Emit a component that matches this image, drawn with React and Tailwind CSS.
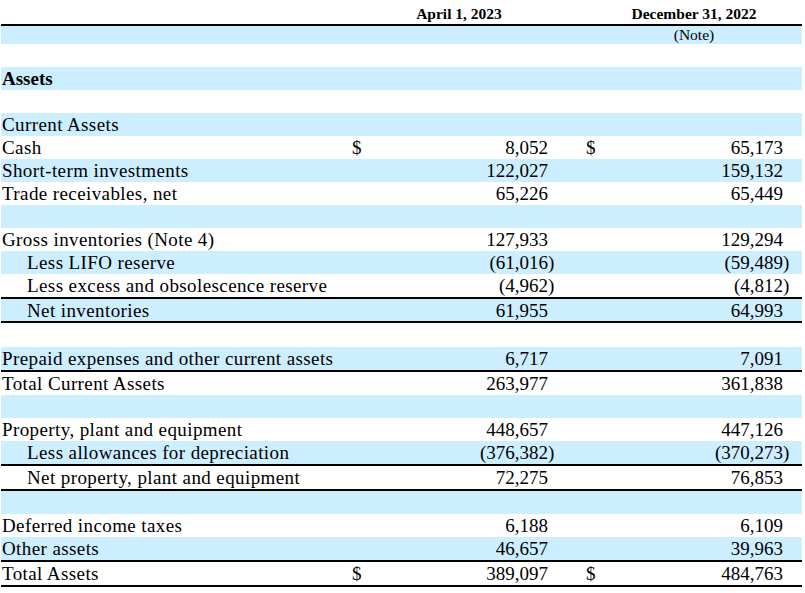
import React from "react";

const rows = [
  { h: "h-[23px]" },
  { label: "Assets", bold: true, blue: true, h: "h-[23px]" },
  { h: "h-[23px]" },
  { label: "Current Assets", blue: true, h: "h-[23px]" },
  { label: "Cash", a: "8,052", b: "65,173", dollar: true, h: "h-[23px]" },
  { label: "Short-term investments", a: "122,027", b: "159,132", blue: true, h: "h-[23px]" },
  { label: "Trade receivables, net", a: "65,226", b: "65,449", h: "h-[23px]" },
  { blue: true, h: "h-[23px]" },
  { label: "Gross inventories (Note 4)", a: "127,933", b: "129,294", h: "h-[23px]" },
  { label: "Less LIFO reserve", indent: true, a: "(61,016", b: "(59,489", paren: true, blue: true, h: "h-[23px]" },
  { label: "Less excess and obsolescence reserve", indent: true, a: "(4,962", b: "(4,812", paren: true, line: true, h: "h-[25px]" },
  { label: "Net inventories", indent: true, a: "61,955", b: "64,993", blue: true, line: true, h: "h-[24px]" },
  { h: "h-[24px]" },
  { label: "Prepaid expenses and other current assets", a: "6,717", b: "7,091", blue: true, line: true, h: "h-[25px]" },
  { label: "Total Current Assets", a: "263,977", b: "361,838", h: "h-[23px]" },
  { blue: true, h: "h-[23px]" },
  { label: "Property, plant and equipment", a: "448,657", b: "447,126", h: "h-[23px]" },
  { label: "Less allowances for depreciation", indent: true, a: "(376,382", b: "(370,273", paren: true, blue: true, line: true, h: "h-[25px]" },
  { label: "Net property, plant and equipment", indent: true, a: "72,275", b: "76,853", line: true, h: "h-[25px]" },
  { blue: true, h: "h-[23px]" },
  { label: "Deferred income taxes", a: "6,188", b: "6,109", h: "h-[23px]" },
  { label: "Other assets", a: "46,657", b: "39,963", blue: true, line: true, h: "h-[25px]" },
  { label: "Total Assets", a: "389,097", b: "484,763", dollar: true, line: true, h: "h-[25px]" },
];

const Row = ({ r }) => (
  <div
    className={`grid grid-cols-[346px_201px_9px_226px_8px_1fr] items-center leading-[23px] ${r.h} ${
      r.blue ? "bg-[#cceeff]" : "bg-white"
    } ${r.line ? "border-b-2 border-black" : ""}`}
  >
    <div
      className={`whitespace-nowrap ${r.indent ? "pl-[26px]" : "pl-px"} ${
        r.bold ? "font-bold" : "tracking-[0.4px]"
      }`}
    >
      {r.label}
    </div>
    <div className="flex justify-between">
      <span className="pl-[5px]">{r.dollar ? "$" : ""}</span>
      <span>{r.a}</span>
    </div>
    <div>{r.paren ? ")" : ""}</div>
    <div className="flex justify-between">
      <span className="pl-[29px]">{r.dollar ? "$" : ""}</span>
      <span>{r.b}</span>
    </div>
    <div>{r.paren ? ")" : ""}</div>
    <div />
  </div>
);

export default function App() {
  return (
    <div className="w-[805px] h-[593px] bg-white text-black font-['Liberation_Serif',serif] text-[19px] pl-px">
      <div className="w-[801px]">
        <div className="flex h-[26px] items-end border-b-2 border-black font-bold text-[15.5px] leading-[20px]">
          <div className="w-[360px]" />
          <div className="w-[196px] text-center">April 1, 2023</div>
          <div className="w-[30px]" />
          <div className="w-[214px] text-center">December 31, 2022</div>
        </div>
        <div className="flex h-[18px] items-center bg-[#cceeff] text-[15.5px] leading-[18px]">
          <div className="w-[586px]" />
          <div className="w-[214px] text-center">(Note)</div>
        </div>
        {rows.map((r, i) => (
          <Row key={i} r={r} />
        ))}
      </div>
    </div>
  );
}
